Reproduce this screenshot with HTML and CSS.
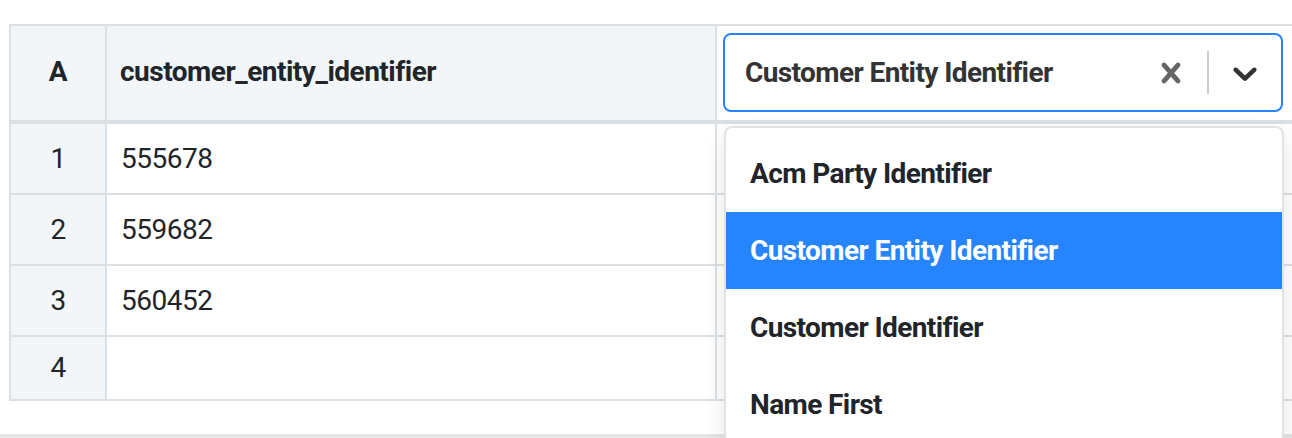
FILE: index.html
```html
<!DOCTYPE html>
<html lang="en">
<head>
<meta charset="utf-8">
<title>Column mapping</title>
<link rel="stylesheet" href="styles.css">
</head>
<body>
<div class="page">
  <div class="grid">
    <div class="cell head idx">A</div>
    <div class="cell head name">customer_entity_identifier</div>
    <div class="cell head pick">
      <div class="select">
        <div class="control">
          <div class="value">Customer Entity Identifier</div>
          <div class="indicators">
            <div class="indicator clear">
              <svg viewBox="0 0 20 20" width="40" height="40" aria-hidden="true"><path d="M14.348 14.849c-0.469 0.469-1.229 0.469-1.697 0l-2.651-3.030-2.651 3.029c-0.469 0.469-1.229 0.469-1.697 0-0.469-0.469-0.469-1.229 0-1.697l2.758-3.15-2.759-3.152c-0.469-0.469-0.469-1.228 0-1.697s1.228-0.469 1.697 0l2.652 3.031 2.651-3.031c0.469-0.469 1.228-0.469 1.697 0s0.469 1.229 0 1.697l-2.758 3.152 2.758 3.150c0.469 0.469 0.469 1.229 0 1.698z"/></svg>
            </div>
            <span class="sep"></span>
            <div class="indicator drop">
              <svg viewBox="0 0 20 20" width="40" height="40" aria-hidden="true"><path d="M4.516 7.548c0.436-0.446 1.043-0.481 1.576 0l3.908 3.747 3.908-3.747c0.533-0.481 1.141-0.446 1.574 0 0.436 0.445 0.408 1.197 0 1.615-0.406 0.418-4.695 4.502-4.695 4.502-0.217 0.223-0.502 0.335-0.787 0.335s-0.57-0.112-0.789-0.335c0 0-4.287-4.084-4.695-4.502s-0.436-1.170 0-1.615z"/></svg>
            </div>
          </div>
        </div>
        <div class="menu">
          <div class="option">Acm Party Identifier</div>
          <div class="option selected">Customer Entity Identifier</div>
          <div class="option">Customer Identifier</div>
          <div class="option">Name First</div>
        </div>
      </div>
    </div>

    <div class="cell idx r1">1</div>
    <div class="cell data r1">555678</div>
    <div class="cell r1"></div>

    <div class="cell idx r2">2</div>
    <div class="cell data r2">559682</div>
    <div class="cell r2"></div>

    <div class="cell idx r3">3</div>
    <div class="cell data r3">560452</div>
    <div class="cell r3"></div>

    <div class="cell idx r4">4</div>
    <div class="cell data r4"></div>
    <div class="cell r4"></div>
  </div>
</div>
</body>
</html>
```

FILE: styles.css
```css
html, body {
  margin: 0;
  padding: 0;
  background: #ffffff;
}

body {
  font-family: Roboto, "Liberation Sans", Arial, sans-serif;
  color: #212529;
  letter-spacing: -0.5px;
  overflow: hidden;
}

.page {
  box-sizing: border-box;
  height: 438px;
  padding: 24px 0 0 9px;
  border-bottom: 4px solid #e4e6e8;
}

.grid {
  display: grid;
  grid-template-columns: 96px 610px 600px;
  grid-template-rows: 98px 71px 71px 71px 64px;
  width: 1308px;
  border-top: 2px solid #dbe0e5;
  border-left: 2px solid #dbe0e5;
}

.cell {
  box-sizing: border-box;
  border-right: 2px solid #dbe0e5;
  border-bottom: 2px solid #dbe0e5;
  display: flex;
  align-items: center;
  font-size: 28px;
  line-height: 1;
}

.head {
  background: #f3f6f9;
  border-bottom-width: 4px;
  font-weight: 700;
}

.idx {
  background: #f3f6f9;
  justify-content: center;
}

.head.idx {
  padding-bottom: 2px;
}

.name {
  padding: 0 0 2px 13px;
}

.data {
  padding-left: 14px;
}

.pick {
  background: #ffffff;
  padding: 7px 0 0 6px;
  align-items: flex-start;
}

.select {
  position: relative;
  width: 560px;
}

.control {
  box-sizing: border-box;
  height: 79px;
  display: flex;
  align-items: stretch;
  border: 2px solid #2684ff;
  border-radius: 8px;
  background: #ffffff;
}

.value {
  flex: 1;
  display: flex;
  align-items: center;
  padding: 4px 16px 4px 20px;
  color: #333333;
  font-weight: 700;
  letter-spacing: -0.6px;
  font-size: 28px;
  white-space: nowrap;
}

.indicators {
  display: flex;
  align-items: stretch;
}

.indicator {
  display: flex;
  align-items: center;
  padding: 0 16px;
}

.indicator svg {
  display: block;
}

.clear svg {
  fill: #666666;
}

.drop svg {
  fill: #333333;
}

.sep {
  width: 2px;
  margin: 16px 0;
  background: #cccccc;
}

.menu {
  position: absolute;
  z-index: 2;
  top: 93px;
  left: 1px;
  box-sizing: border-box;
  width: 560px;
  height: 330px;
  padding-top: 7px;
  background: #ffffff;
  border: 2px solid #e2e2e2;
  border-bottom: 0;
  border-radius: 8px 8px 0 0;
  box-shadow: 0 8px 22px rgba(0, 0, 0, 0.1);
  overflow: hidden;
}

.option {
  height: 77px;
  display: flex;
  align-items: center;
  padding: 0 24px;
  font-size: 28px;
  font-weight: 700;
  letter-spacing: -0.6px;
  color: #212529;
  white-space: nowrap;
}

.option.selected {
  background: #2684ff;
  color: #ffffff;
}
```
